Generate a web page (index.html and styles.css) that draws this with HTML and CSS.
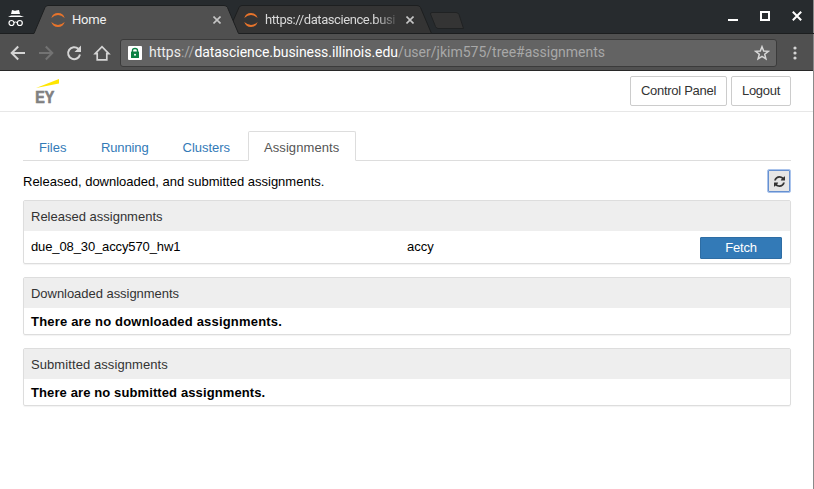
FILE: index.html
```html
<!DOCTYPE html>
<html lang="en">
<head>
<meta charset="utf-8">
<title>Home</title>
<link rel="stylesheet" href="styles.css">
</head>
<body>
<div class="window">
  <div class="tabstrip">
    <svg class="tab-shapes" width="814" height="35" viewBox="0 0 814 35" aria-hidden="true">
      <path d="M0 33.5H814" stroke="#1c1e1f"/>
      <path d="M237 33.500L233 21L239 7.500Q240 5.500 242 5.500H417Q419.500 5.500 420.500 7.500L431.500 33.500Z" fill="#343434" stroke="#1d1f20"/>
      <path d="M34 35V33.500L45 7.500Q46 5.500 48 5.500H224Q226.500 5.500 227.500 7.500L238.500 33.500V35Z" fill="#505050"/>
      <path d="M34 33.500L45 7.500Q46 5.500 48 5.500H224Q226.500 5.500 227.500 7.500L238.500 33.500" fill="none" stroke="#1d1f20"/>
      <path d="M432 12.500H456Q458 12.500 459 14.500L463.500 28.500H438Q436.500 28.500 435.500 26.500L430.500 14Q430.500 12.500 432 12.500Z" fill="#343434" stroke="#202223"/>
    </svg>
    <svg class="incognito" width="18" height="18" viewBox="0 0 18 18" fill="none" stroke="#fff">
      <path d="M5 1L7 1.500Q8 2 9 1.500L12 1L13 5H4Z" fill="#fff" stroke="none"/>
      <path d="M4 6.500H13L17 8H1Z" fill="#fff" stroke="none"/>
      <circle cx="4.500" cy="14" r="2.500" stroke-width="1.200"/><circle cx="12.800" cy="14" r="2.500" stroke-width="1.200"/><path d="M7 13.500Q8.500 12.500 10.200 13.500"/>
    </svg>
    <div class="tab first">
      <svg class="jupyter" width="14" height="14" viewBox="0 0 14 14" fill="#e8742b"><path d="M.3 5A7 7 0 0 1 13.700 5Q7-.8.300 5ZM.3 9A7 7 0 0 0 13.700 9Q7 14.800.300 9Z"/></svg>
      <span class="tab-title">Home</span>
      <svg class="tab-close" width="8" height="8" viewBox="0 0 8 8" stroke="#c5c5c5" stroke-width="1.600"><path d="M.5.500L7.500 7.500M7.500.500L.5 7.500"/></svg>
    </div>
    <div class="tab second">
      <svg class="jupyter" width="14" height="14" viewBox="0 0 14 14" fill="#e8742b"><path d="M.3 5A7 7 0 0 1 13.700 5Q7-.8.300 5ZM.3 9A7 7 0 0 0 13.700 9Q7 14.800.300 9Z"/></svg>
      <span class="tab-title faded">https://datascience.busi</span>
      <svg class="tab-close" width="8" height="8" viewBox="0 0 8 8" stroke="#c5c5c5" stroke-width="1.600"><path d="M.5.500L7.500 7.500M7.500.500L.5 7.500"/></svg>
    </div>
    <svg class="controls" width="76" height="12" viewBox="0 0 76 12" fill="none" stroke="#fff" stroke-width="2"><path d="M0 9H10"/><path d="M33 1H41V9H33Z"/><path d="M64.800.800L73.200 9.200M73.200.800L64.800 9.200"/></svg>
  </div>
  <div class="toolbar">
    <svg width="84" height="20" viewBox="0 0 84 20" fill="none" stroke="#d5d5d5" stroke-width="2">
      <path d="M25 10H12M18.200 3.500L11.700 10L18.200 16.500"/>
      <path d="M39 10H52M45.800 3.500L52.300 10L45.800 16.500" stroke="#737373"/>
      <path d="M80 11.500A6 6 0 1 1 78.300 5.800"/>
      <path d="M74.500 9H81V2.500Z" fill="#d5d5d5" stroke="none"/>
    </svg>
    <svg class="home" width="18" height="18" viewBox="0 0 18 18" fill="none" stroke="#d5d5d5" stroke-width="1.700"><path d="M2.200 9.700L9 2.700L15.800 9.700H13.800V15.800H4.200V9.700Z"/></svg>
    <div class="address">
      <svg class="lock" width="14" height="14" viewBox="0 0 14 14"><rect width="14" height="14" rx="1" fill="#fff"/><path d="M4.500 6V4.500Q4.500 2.500 7 2.500T9.500 4.500V6" fill="none" stroke="#0b8043" stroke-width="1.400"/><rect x="3" y="5.500" width="8" height="6.500" rx=".5" fill="#0b8043"/><circle cx="7" cy="8.700" r="1" fill="#fff"/></svg>
      <span class="url">https<i>://</i><b>datascience.business.illinois.edu</b><i>/user/jkim575/tree#assignments</i></span>
      <svg class="star" width="16" height="16" viewBox="0 0 16 16" fill="none" stroke="#d8d8d8" stroke-width="1.500"><path d="M8 1.700L9.700 6L14.300 6.300L10.700 9.200L11.900 13.900L8 11.300L4.100 13.900L5.300 9.200L1.700 6.300L6.300 6Z"/></svg>
    </div>
    <svg class="more" width="4" height="14" viewBox="0 0 4 14" fill="#d5d5d5"><circle cx="2" cy="2" r="1.600"/><circle cx="2" cy="7" r="1.600"/><circle cx="2" cy="12" r="1.600"/></svg>
  </div>
  <div class="page">
    <header>
      <svg class="logo" width="25" height="27" viewBox="0 0 25 27"><path d="M1 9L24 0V4.500Z" fill="#ffe600"/><text x=".3" y="23.700" textLength="19" lengthAdjust="spacingAndGlyphs">EY</text></svg>
      <div class="actions"><button class="btn panel">Control Panel</button><button class="btn logout">Logout</button></div>
    </header>
    <main>
      <nav><a>Files</a><a class="running">Running</a><a class="clusters">Clusters</a><a class="active">Assignments</a></nav>
      <div class="intro"><span>Released, downloaded, and submitted assignments.</span>
        <button class="refresh" aria-label="Refresh"><svg width="11" height="11" viewBox="0 0 1536 1536" fill="#333"><path d="M1511 928q0 5-1 7-64 268-268 434.500T764 1536q-146 0-282.500-55T238 1324l-129 129q-19 19-45 19t-45-19-19-45V960q0-26 19-45t45-19h448q26 0 45 19t19 45-19 45l-137 137q71 66 161 102t187 36q134 0 250-65t186-179q11-17 53-117 8-23 30-23h192q13 0 22.500 9.500t9.500 22.500zm25-800v448q0 26-19 45t-45 19h-448q-26 0-45-19t-19-45 19-45l138-138Q969 256 768 256q-134 0-250 65T332 500q-11 17-53 117-8 23-30 23H50q-13 0-22.500-9.500T18 608v-7q65-268 270-434.500T768 0q146 0 284 55.500T1297 212l130-129q19-19 45-19t45 19 19 45z"/></svg></button>
      </div>
      <section><h2>Released assignments</h2><div class="row"><span class="name">due_08_30_accy570_hw1</span><span>accy</span><button class="fetch">Fetch</button></div></section>
      <section><h2 class="tight">Downloaded assignments</h2><p>There are no downloaded assignments.</p></section>
      <section><h2 class="loose">Submitted assignments</h2><p class="submitted">There are no submitted assignments.</p></section>
    </main>
  </div>
</div>
</body>
</html>
```

FILE: styles.css
```css
* { box-sizing: border-box; }
body { margin: 0; overflow: hidden; font: 13px/18px "Liberation Sans", sans-serif; color: #000; }
button { font: inherit; margin: 0; }
svg { display: block; flex: none; }
.window { height: 489px; display: flex; flex-direction: column; background: #fff; border-right: 1px solid #8a8a8a; }
.tabstrip { position: relative; display: flex; height: 34px; background: #272b2e; flex: none; font-family: Roboto, sans-serif; color: #f1f1f1; }
.tab-shapes { position: absolute; left: 0; top: 0; }
.incognito { margin: 9px 0 0 7px; }
.tab { position: relative; display: flex; align-items: center; height: 29px; margin-top: 5px; }
.first { width: 170px; margin-left: 26px; }
.second { width: 170px; margin-left: 23px; }
.tab-title { margin-left: 7px; flex: 1; white-space: nowrap; letter-spacing: -.2px; }
.faded { color: #d9d9d9; letter-spacing: -.42px; -webkit-mask-image: linear-gradient(90deg, #000 78%, transparent 96%); mask-image: linear-gradient(90deg, #000 78%, transparent 96%); }
.controls { margin: 11px 9px 0 auto; }
.toolbar { display: flex; align-items: center; height: 37px; padding-top: 1px; background: #505050; border-bottom: 1px solid #282828; flex: none; }
.home { margin-left: 9px; }
.address { display: flex; align-items: center; width: 657px; height: 28px; margin-left: 9px; padding: 0 6px 0 7px; background: #636363; border: 1px solid #3b3b3b; border-radius: 3px; }
.url { margin: 0 0 2px 7px; flex: 1; white-space: nowrap; font: 14px/20px Roboto, sans-serif; color: #ececec; }
.url i { font-style: normal; color: #a8a8a8; }
.url b { font-weight: 400; color: #fff; letter-spacing: -.06px; }
.more { margin-left: 16px; }
header { display: flex; justify-content: space-between; height: 41px; padding: 5px 22px 0 35px; border-bottom: 1px solid #e7e7e7; }
.logo { margin-top: 3px; }
.logo text { font: bold 16.5px "Liberation Sans", sans-serif; fill: #808080; stroke: #808080; stroke-width: .7px; }
.actions { display: flex; gap: 4px; height: 30px; }
.btn { padding: 0; color: #333; background: #fff; border: 1px solid #ccc; border-radius: 2px; letter-spacing: -.28px; }
.panel { width: 97px; }
.logout { width: 60px; }
main { padding: 19px 22px 0 23px; }
nav { display: flex; height: 30px; border-bottom: 1px solid #ddd; }
nav a { height: 30px; padding: 7px 15px; border: 1px solid transparent; margin-right: 2px; color: #337ab7; }
nav a:first-child { margin-right: 2.5px; }
.running { letter-spacing: -.12px; }
.clusters { letter-spacing: -.04px; }
nav .active { width: 108px; color: #555; background: #fff; border-color: #ddd #ddd #fff; border-radius: 2px 2px 0 0; letter-spacing: .1px; }
.intro { display: flex; justify-content: space-between; align-items: center; height: 39px; padding-top: 1px; }
.intro span { padding-top: 2px; }
.refresh { display: flex; align-items: center; justify-content: center; width: 24px; height: 24px; padding: 0; background: #e6e6e6; border: 1px solid #a9c3ec; border-radius: 2px; box-shadow: inset 0 0 0 1px #6690d0; }
section { margin-bottom: 13px; border: 1px solid #ddd; border-radius: 2px; box-shadow: 0 1px 1px rgba(0,0,0,.05); }
h2 { margin: 0; height: 30px; padding: 7px 7px 5px; font: inherit; color: #333; background: #eee; }
.tight { letter-spacing: -.04px; }
.loose { letter-spacing: .08px; }
.row { display: grid; grid-template-columns: 376px 1fr 82px; height: 32px; padding: 6px 8px 4px 7px; }
.row span { padding-top: 1px; }
.name { letter-spacing: -.12px; }
.fetch { height: 22px; padding: 0; color: #fff; background: #337ab7; border: 1px solid #2e6da4; border-radius: 1px; line-height: 18px; letter-spacing: -.25px; }
p { margin: 0; height: 26px; padding: 5px 7px 3px; font-weight: 700; letter-spacing: .19px; }
.submitted { letter-spacing: .11px; }
```
